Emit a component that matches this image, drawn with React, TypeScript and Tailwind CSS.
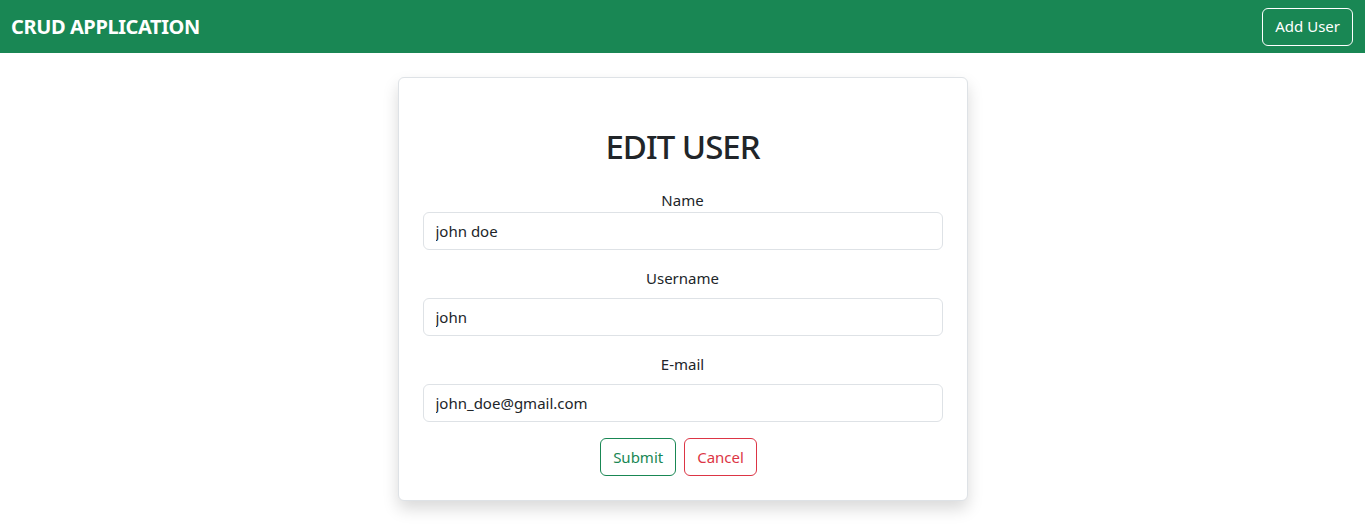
import React from "react";

const font = { fontFamily: '"Noto Sans", "Segoe UI", sans-serif' };

function Field({ label, value, first }: { label: string; value: string; first?: boolean }) {
  return (
    <div className={first ? "" : "mt-4"}>
      <label className={`block text-center text-[15px] leading-6 text-[#212529] ${first ? "" : "mb-2"}`}>
        {label}
      </label>
      <input
        defaultValue={value}
        className="block w-full h-[38px] px-3 rounded-[6px] border border-[#dee2e6] text-[15px] text-[#212529] bg-white outline-none"
      />
    </div>
  );
}

export default function App() {
  return (
    <div className="min-h-screen bg-white" style={font}>
      <nav className="h-[53px] bg-[#198754] flex items-center justify-between pl-[11px] pr-3">
        <span className="text-white font-bold text-[20px] tracking-[-0.4px]">CRUD APPLICATION</span>
        <button className="h-[38px] px-3 rounded-[6px] border border-white text-white text-[15px]">
          Add User
        </button>
      </nav>

      <main className="pt-6">
        <div className="w-[570px] mx-auto bg-white border border-[#dee2e6] rounded-[6px] shadow-[0_8px_16px_rgba(0,0,0,0.15)] px-6 pt-[49px] pb-6">
          <h2 className="text-center text-[33px] leading-[40px] font-medium tracking-[-1px] text-[#212529] mb-[21px]">
            EDIT USER
          </h2>
          <Field label="Name" value="john doe" first />
          <Field label="Username" value="john" />
          <Field label="E-mail" value="john_doe@gmail.com" />
          <div className="flex justify-center gap-2 mt-4 pr-2">
            <button className="h-[38px] px-3 rounded-[6px] border border-[#198754] text-[#198754] text-[15px]">
              Submit
            </button>
            <button className="h-[38px] px-3 rounded-[6px] border border-[#dc3545] text-[#dc3545] text-[15px]">
              Cancel
            </button>
          </div>
        </div>
      </main>
    </div>
  );
}
